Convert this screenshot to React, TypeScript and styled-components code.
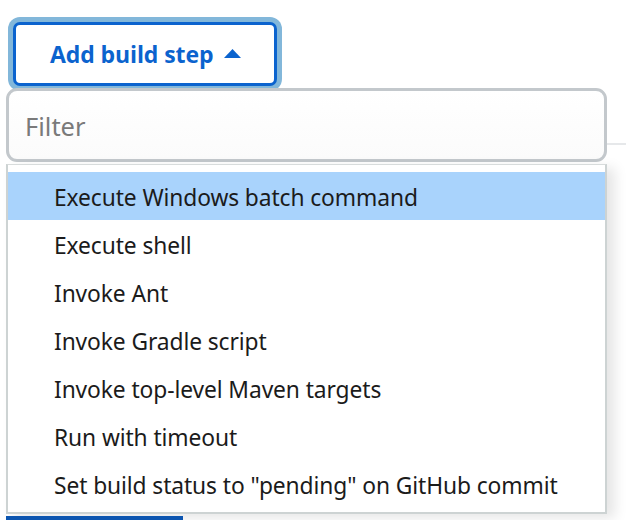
import React from "react";
import styled, { createGlobalStyle } from "styled-components";

const Global = createGlobalStyle`
  html, body { margin: 0; padding: 0; background: #ffffff; }
  body { font-family: "Noto Sans", "Open Sans", sans-serif; overflow: hidden; }
`;

const Page = styled.div`
  width: 626px;
  height: 520px;
  position: relative;
  padding: 22px 0 0 6px;
  box-sizing: border-box;
  background: linear-gradient(#e6e8ea, #e6e8ea) no-repeat right 0 top 143px / 19px 2px,
    #ffffff;
`;

const ButtonRow = styled.div`
  display: flex;
  padding-left: 7px;
`;

const AddButton = styled.button`
  display: flex;
  align-items: center;
  gap: 11px;
  width: 264px;
  height: 64px;
  box-sizing: border-box;
  padding: 0 0 0 34px;
  border: 3px solid #0b63ce;
  border-radius: 7px;
  background: #ffffff;
  box-shadow: 0 0 0 5px #82b7da;
  color: #0b63ce;
  font-family: "Open Sans", "Noto Sans", sans-serif;
  font-weight: 700;
  font-size: 23px;
  letter-spacing: -0.1px;
  cursor: pointer;
`;

const Caret = styled.svg`
  width: 17px;
  height: 9px;
  margin-top: -2px;
`;

const Dropdown = styled.div`
  width: 601px;
  margin-top: 2px;
  display: flex;
  flex-direction: column;
`;

const FilterBox = styled.div`
  height: 74px;
  box-sizing: border-box;
  border: 3px solid #c3c8cc;
  border-radius: 11px;
  background: linear-gradient(#ffffff, #fbfbfb);
  display: flex;
  align-items: center;
  padding: 2px 0 0 16px;
`;

const FilterInput = styled.input`
  border: none;
  outline: none;
  background: transparent;
  font-family: "Noto Sans", "Open Sans", sans-serif;
  font-size: 25.5px;
  color: #333;
  width: 100%;
  padding: 0;
  &::placeholder {
    color: #7a7a7a;
  }
`;

const List = styled.ul`
  list-style: none;
  margin: 2px 0 0 0;
  padding: 7px 0 4px 0;
  height: 350px;
  box-sizing: border-box;
  background: #ffffff;
  border: 2px solid #cdd3d3;
  border-top: 1px solid #d8dcdc;
  box-shadow: 8px 4px 12px rgba(0, 0, 0, 0.1);
`;

const Item = styled.li<{ $active?: boolean }>`
  height: 48px;
  display: flex;
  align-items: center;
  padding: 2px 0 0 46px;
  box-sizing: border-box;
  background: ${(p) => (p.$active ? "#a9d3fc" : "transparent")};
  color: #1b1b1b;
  font-size: 22.8px;
  letter-spacing: -0.1px;
`;

const BelowBar = styled.div`
  width: 177px;
  height: 5px;
  margin-top: 2px;
  background: #0c55b0;
`;

const items = [
  "Execute Windows batch command",
  "Execute shell",
  "Invoke Ant",
  "Invoke Gradle script",
  "Invoke top-level Maven targets",
  "Run with timeout",
  'Set build status to "pending" on GitHub commit',
];

export default function App() {
  return (
    <Page>
      <Global />
      <ButtonRow>
        <AddButton>
          Add build step
          <Caret viewBox="0 0 17 9">
            <path d="M0 9 L8.5 0 L17 9 Z" fill="#0b63ce" />
          </Caret>
        </AddButton>
      </ButtonRow>
      <Dropdown>
        <FilterBox>
          <FilterInput placeholder="Filter" />
        </FilterBox>
        <List>
          {items.map((t, i) => (
            <Item key={t} $active={i === 0}>
              {t}
            </Item>
          ))}
        </List>
        <BelowBar />
      </Dropdown>
    </Page>
  );
}
